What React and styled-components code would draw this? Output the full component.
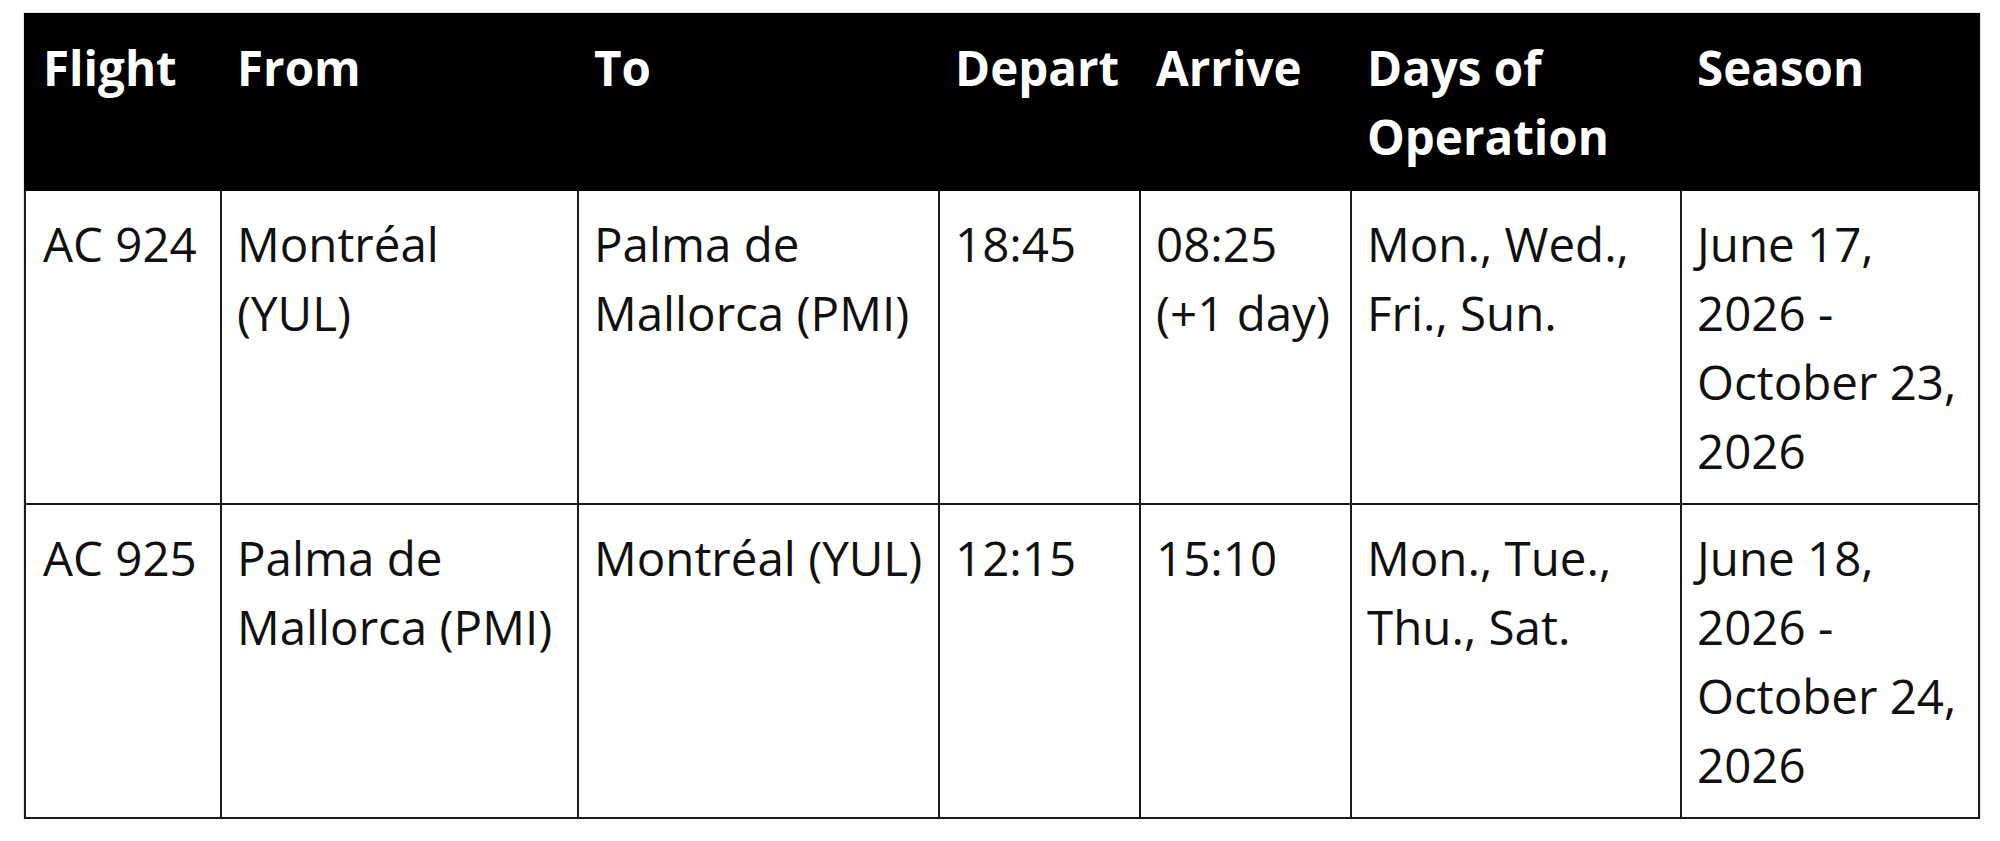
import React from 'react';
import styled, { createGlobalStyle } from 'styled-components';

const GlobalStyle = createGlobalStyle`
  html, body {
    margin: 0;
    padding: 0;
    background: #fff;
  }
  body {
    font-family: 'Open Sans', 'Noto Sans', sans-serif;
    color: #000;
  }
`;

const Page = styled.div`
  padding: 13px 0 0 24px;
`;

const Table = styled.table`
  width: 1954px;
  table-layout: fixed;
  border-collapse: collapse;
  box-shadow: 0 0 0 1px #e6e6e6;
  font-family: 'Open Sans', 'Noto Sans', sans-serif;
  font-size: 47.5px;
  line-height: 69px;
`;

const HeadCell = styled.th`
  background: #000;
  color: #fff;
  font-weight: 700;
  text-align: left;
  vertical-align: top;
  padding: 18px 14px 18px 15px;
  border: 2px solid #000;

  &:first-child {
    padding-left: 17px;
  }
`;

const Cell = styled.td`
  color: #111;
  font-weight: 400;
  text-align: left;
  vertical-align: top;
  padding: 18px 14px 18px 15px;
  border: 2px solid #1a1a1a;

  &:first-child {
    padding-left: 17px;
  }
`;

const columns = [
  { key: 'flight', label: 'Flight', width: 196 },
  { key: 'from', label: 'From', width: 357 },
  { key: 'to', label: 'To', width: 361 },
  { key: 'depart', label: 'Depart', width: 201 },
  { key: 'arrive', label: 'Arrive', width: 211 },
  { key: 'days', label: 'Days of Operation', width: 330 },
  { key: 'season', label: 'Season', width: 298 },
];

const flights = [
  {
    flight: 'AC 924',
    from: 'Montréal (YUL)',
    to: 'Palma de Mallorca (PMI)',
    depart: '18:45',
    arrive: '08:25 (+1 day)',
    days: 'Mon., Wed., Fri., Sun.',
    season: 'June 17, 2026 - October 23, 2026',
  },
  {
    flight: 'AC 925',
    from: 'Palma de Mallorca (PMI)',
    to: 'Montréal (YUL)',
    depart: '12:15',
    arrive: '15:10',
    days: 'Mon., Tue., Thu., Sat.',
    season: 'June 18, 2026 - October 24, 2026',
  },
];

export default function App() {
  return (
    <>
      <GlobalStyle />
      <Page>
        <Table>
          <colgroup>
            {columns.map((col) => (
              <col key={col.key} style={{ width: col.width }} />
            ))}
          </colgroup>
          <thead>
            <tr>
              {columns.map((col) => (
                <HeadCell key={col.key}>{col.label}</HeadCell>
              ))}
            </tr>
          </thead>
          <tbody>
            {flights.map((row) => (
              <tr key={row.flight}>
                {columns.map((col) => (
                  <Cell key={col.key}>{row[col.key]}</Cell>
                ))}
              </tr>
            ))}
          </tbody>
        </Table>
      </Page>
    </>
  );
}
